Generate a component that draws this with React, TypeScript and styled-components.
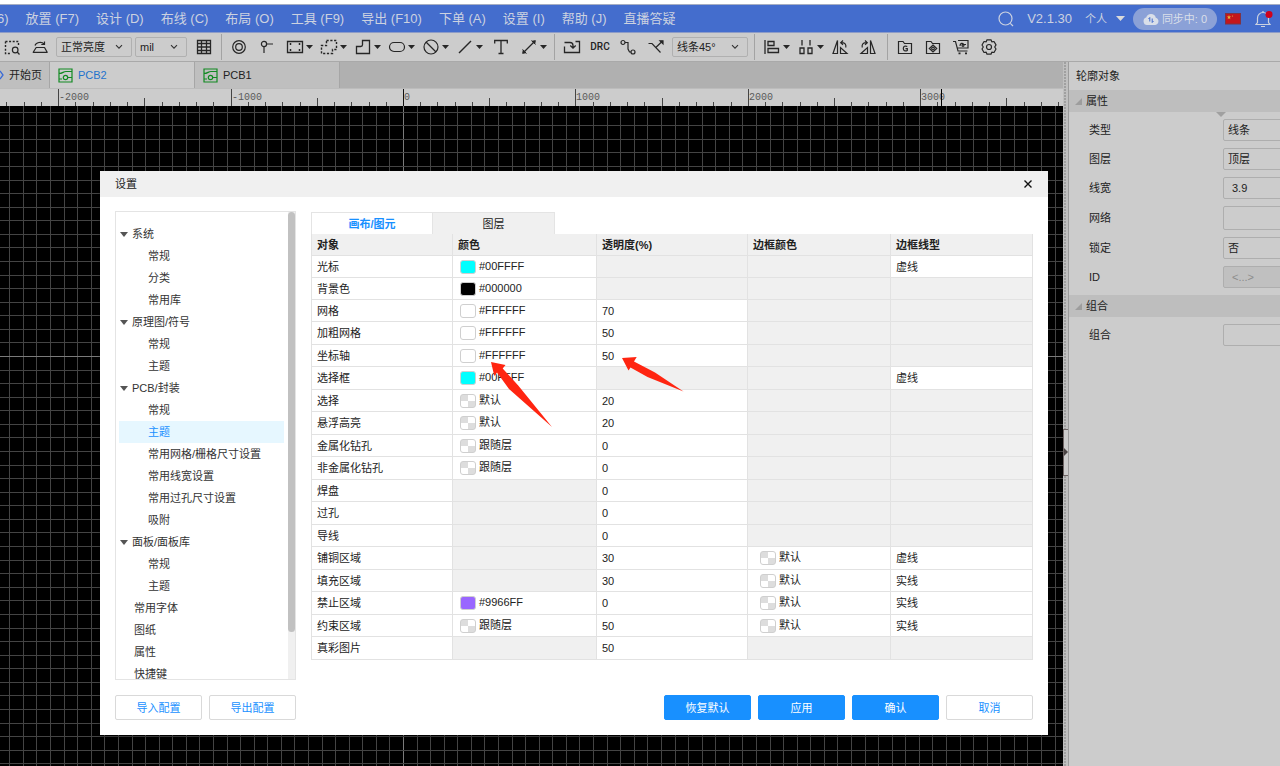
import React from "react";
import styled, { createGlobalStyle, css } from "styled-components";

const GlobalStyle = createGlobalStyle`
  * { box-sizing: border-box; }
  html, body, #root { height: 100%; }
  body {
    margin: 0;
    overflow: hidden;
    background: #ffffff;
    color: #222222;
    font-family: "Liberation Sans", "Noto Sans CJK SC", sans-serif;
    font-size: 11px;
    line-height: 16px;
  }
  button, input, select {
    margin: 0;
    padding: 0;
    font: inherit;
    color: inherit;
  }
  ul { margin: 0; padding: 0; list-style: none; }
`;

/* ---------- page frame ---------- */

const Page = styled.div`
  position: relative;
  display: flex;
  flex-direction: column;
  height: 100vh;
  min-height: 766px;
  overflow: hidden;
`;

const MenuBar = styled.header`
  display: flex;
  align-items: center;
  height: 33px;
  padding: 1px 7px 0 0;
  border-top: 4px solid #ffffff;
  border-bottom: 1px solid #8d9cc8;
  background: #446dcd;
  box-shadow: inset 0 1px 0 #a5adc2;
  color: #ccd2e0;
  font-size: 13px;
  white-space: nowrap;
  flex: none;
`;

const MenuList = styled.nav`
  display: flex;
  gap: 17px;
  margin-left: -3px;
`;

const MenuButton = styled.button`
  border: 0;
  background: none;
  line-height: 20px;
  white-space: nowrap;
`;

const MenuRight = styled.div`
  display: flex;
  align-items: center;
  margin-left: auto;
`;

const IconButton = styled.button`
  display: grid;
  place-items: center;
  border: 0;
  background: none;
`;

const Version = styled.span`
  margin-left: 13px;
`;

const Account = styled.button`
  display: flex;
  align-items: center;
  gap: 9px;
  margin-left: 13px;
  border: 0;
  background: none;
  font-size: 11px;
`;

const SyncPill = styled.button`
  display: flex;
  align-items: center;
  justify-content: center;
  gap: 3px;
  width: 84px;
  height: 22px;
  margin: 0 8px;
  border: 0;
  border-radius: 11px;
  background: #8ba1d7;
  color: #dadfe9;
  font-size: 11px;
`;

const BellButton = styled(IconButton)`
  margin-left: 14px;
`;

/* ---------- toolbar ---------- */

const Toolbar = styled.div`
  display: flex;
  align-items: center;
  height: 29px;
  padding-right: 8px;
  border-bottom: 1px solid #a9a9a9;
  background: #cccccc;
  margin-left: -2px;
  flex: none;
`;

const ToolGroup = styled.div`
  display: flex;
  align-items: center;
  margin-right: 2px;
`;

const ToolButton = styled(IconButton)`
  width: 28px;
  height: 26px;
`;

const ToolMenu = styled.button`
  display: flex;
  align-items: center;
  gap: 2px;
  width: 34px;
  height: 26px;
  padding-left: 5px;
  border: 0;
  background: none;
`;

const Separator = styled.i`
  width: 1px;
  height: 26px;
  margin: 0 3px;
  background: #a3a3a3;
`;

const PickerBox = styled.div<{ $width: number }>`
  display: grid;
  grid-template-columns: 1fr 16px;
  align-items: center;
  width: ${(p) => p.$width}px;
  height: 20px;
  margin-right: 3px;
  border: 1px solid #b0b0b0;
  border-radius: 2px;
  svg { grid-area: 1 / 2; pointer-events: none; }
`;

const Picker = styled.select`
  grid-area: 1 / 1 / 2 / 3;
  width: 100%;
  height: 18px;
  padding: 0 0 0 4px;
  border: 0;
  appearance: none;
  background: none;
`;

const DrcLabel = styled.span`
  font-size: 10px;
  line-height: 12px;
  font-family: Roboto, sans-serif;
  font-weight: 500;
`;

/* ---------- work area ---------- */

const Work = styled.div`
  display: flex;
  flex: 1;
  min-height: 0;
`;

const Editor = styled.main`
  display: flex;
  flex-direction: column;
  flex: 1;
  min-width: 0;
`;

const FileTabs = styled.div`
  display: flex;
  height: 27px;
  background: #b0b0b0;
  border-bottom: 1px solid #bcbcbc;
  flex: none;
`;

const FileTab = styled.button<{ $active?: boolean; $home?: boolean }>`
  display: flex;
  align-items: center;
  gap: 5px;
  width: ${(p) => (p.$home ? 50 : 145)}px;
  padding-left: ${(p) => (p.$home ? 0 : 8)}px;
  border: 0;
  border-right: 1px solid #a6a6a6;
  background: ${(p) => (p.$active ? "#cccccc" : "#bfbfbf")};
  color: ${(p) => (p.$active ? "#1f73cc" : "#222222")};
  white-space: nowrap;
  overflow: hidden;
`;

const RulerSvg = styled.svg`
  display: block;
  width: 100%;
  height: 17px;
  background: #cccccc;
  flex: none;
  text { font: 10px "Liberation Mono", monospace; fill: #5a5a5a; }
`;

const CanvasArea = styled.div`
  flex: 1;
  min-height: 0;
  background: #000000;
  overflow: hidden;
`;

const GridSvg = styled.svg`
  display: block;
  width: 100%;
  height: 100%;
`;

const Splitter = styled.div`
  display: flex;
  align-items: center;
  width: 6px;
  border-right: 1px solid #9c9c9c;
  background: radial-gradient(circle at 2px 1px, #a0a0a0 1px, transparent 1px) 0 0 / 5px 3px #c0c0c0;
  padding-top: 76px;
  flex: none;
`;

const SplitHandle = styled.button`
  display: flex;
  align-items: center;
  width: 5px;
  height: 47px;
  border: 1px solid #6e6565;
  border-right: 0;
  background: #cccccc;
  overflow: hidden;
`;

/* ---------- property panel ---------- */

const Panel = styled.aside`
  width: 211px;
  background: #cccccc;
  overflow: hidden;
  flex: none;
`;

const PanelTitle = styled.div`
  height: 28px;
  padding: 6px 7px;
`;

const PanelSection = styled.button`
  display: flex;
  align-items: center;
  gap: 4px;
  width: 100%;
  height: 22px;
  padding-left: 6px;
  border: 0;
  background: #bebebe;
`;

const Fields = styled.div`
  display: flex;
  flex-direction: column;
  gap: 7px;
  padding: 7px 0 7px 20px;
`;

const Field = styled.div`
  display: flex;
  align-items: center;
  label { flex: 0 0 134px; }
`;

const fieldBox = css`
  flex: 0 0 120px;
  height: 22px;
  padding: 0 4px;
  border: 1px solid #aeaeae;
  border-radius: 2px;
  background: #cccccc;
`;

const FieldSelect = styled.select`
  ${fieldBox}
  appearance: none;
`;

const FieldInput = styled.input<{ $tall?: boolean }>`
  ${fieldBox}
  height: ${(p) => (p.$tall ? 24 : 22)}px;
  padding: 0 8px;
  &:disabled { background: #c0c0c0; color: #8c8c8c; }
`;

const WidthMarker = styled.svg`
  position: absolute;
  right: 54px;
  top: 112px;
`;

/* ---------- settings dialog ---------- */

const Dialog = styled.section`
  position: absolute;
  left: 100px;
  right: 232px;
  top: 171px;
  background: #ffffff;
  box-shadow: 0 1px 3px rgba(0, 0, 0, 0.4);
`;

const DialogHead = styled.div`
  display: flex;
  align-items: center;
  justify-content: space-between;
  height: 26px;
  padding: 0 15px;
  background: #f0f0f0;
`;

const DialogBody = styled.div`
  display: flex;
  gap: 15px;
  height: 483px;
  padding: 14px 15px 0;
`;

const TreePane = styled.div`
  display: flex;
  flex: 0 0 181px;
  border: 1px solid #e4e4e4;
  overflow: hidden;
`;

const TreeList = styled.ul`
  flex: 1;
  padding: 11px 4px 0 3px;
`;

const TreeNode = styled.button<{ $depth: number; $active?: boolean }>`
  display: flex;
  align-items: center;
  gap: 4px;
  width: 165px;
  height: 22px;
  padding-left: ${(p) => [1, 15, 29][p.$depth]}px;
  border: 0;
  background: ${(p) => (p.$active ? "#e6f7ff" : "none")};
  color: ${(p) => (p.$active ? "#1890ff" : "#333333")};
  white-space: nowrap;
`;

const ScrollTrack = styled.div`
  width: 8px;
  background: #f0f0f0;
`;

const ScrollThumb = styled.div`
  height: 90%;
  border-radius: 4px;
  background: #c1c1c1;
`;

const Content = styled.div`
  flex: 1;
  min-width: 0;
  padding-top: 1px;
`;

const Tabs = styled.div`
  display: flex;
  height: 22px;
`;

const Tab = styled.button<{ $active?: boolean }>`
  width: 122px;
  border: 1px solid #e4e4e4;
  border-bottom: 0;
  background: ${(p) => (p.$active ? "#ffffff" : "#f0f0f0")};
  color: ${(p) => (p.$active ? "#1890ff" : "#222222")};
  font-weight: ${(p) => (p.$active ? 700 : 400)};
  & + & { border-left: 0; }
`;

const Table = styled.table`
  width: 100%;
  table-layout: fixed;
  border-spacing: 0;
  border-left: 1px solid #e2e2e2;
`;

const Column = styled.col<{ $width?: number }>`
  width: ${(p) => (p.$width ? `${p.$width}px` : "auto")};
`;

const HeadCell = styled.th`
  height: 22px;
  padding: 0 5px;
  border-right: 1px solid #e2e2e2;
  border-bottom: 1px solid #e2e2e2;
  background: #f0f0f0;
  text-align: left;
`;

const Row = styled.tr`
  height: 22px;
  &:nth-child(2n + 4) { height: 23px; }
`;

const Cell = styled.td<{ $off?: boolean; $inset?: number }>`
  padding: 0 0 0 ${(p) => p.$inset ?? 5}px;
  border-right: 1px solid #e2e2e2;
  border-bottom: 1px solid #e2e2e2;
  background: ${(p) => (p.$off ? "#f0f0f0" : "#ffffff")};
`;

const ColorValue = styled.button`
  display: flex;
  align-items: center;
  gap: 3px;
  border: 0;
  background: none;
  line-height: 16px;
  span { padding-bottom: 2px; }
`;

const Swatch = styled.i<{ $color: string | null }>`
  width: 16px;
  height: 14px;
  border: 1px solid #cfcfcf;
  border-radius: 3px;
  background: ${(p) =>
    p.$color ?? "conic-gradient(#ffffff 25%, #dddddd 0 50%, #ffffff 0 75%, #dddddd 0)"};
`;

const DialogFoot = styled.div`
  display: flex;
  gap: 7px;
  padding: 15px;
`;

const FootButton = styled.button<{ $primary?: boolean; $push?: boolean }>`
  width: 87px;
  height: 25px;
  border: 1px solid ${(p) => (p.$primary ? "#1890ff" : "#d9d9d9")};
  border-radius: 2px;
  background: ${(p) => (p.$primary ? "#1890ff" : "#ffffff")};
  color: ${(p) => (p.$primary ? "#ffffff" : "#1890ff")};
  margin-left: ${(p) => (p.$push ? "auto" : "0")};
`;

const Arrows = styled.svg`
  position: absolute;
  left: 490px;
  top: 355px;
  pointer-events: none;
`;

/* ---------- icons ---------- */

const Icon = ({ children }: { children: React.ReactNode }) => (
  <svg width="18" height="18" viewBox="0 0 18 18" fill="none" stroke="#262626" strokeWidth="1.2">
    {children}
  </svg>
);

const Caret = () => (
  <svg width="7" height="4" viewBox="0 0 7 4">
    <path d="M0 0h7L3.5 4z" fill="#262626" />
  </svg>
);

const Chevron = () => (
  <svg width="8" height="6" viewBox="0 0 8 6" fill="none" stroke="#333333" strokeWidth="1.1">
    <path d="M1 1.2l3 3 3-3" />
  </svg>
);

const ic = {
  marquee: (
    <Icon>
      <path d="M2.5 3.5h13v5M2.5 3.5v12h6" strokeDasharray="2 1.6" strokeWidth="1.4" />
      <circle cx="12.2" cy="12" r="2.8" />
      <path d="M14.2 14l2.3 2.5" />
    </Icon>
  ),
  dome: (
    <Icon>
      <path d="M5.2 9.5h8.3l2.7 4.8H2.2z" strokeLinejoin="round" />
      <path d="M4 7.5c.8-3 6.5-4.6 9-1.5M13.5 3.5v3h-3.2" />
    </Icon>
  ),
  grid: (
    <Icon>
      <path
        d="M2.5 2.5h13v13h-13zM6.5 2.5v13M11.5 2.5v13M2.5 5.5h13M2.5 9h13M2.5 12.5h13"
        strokeWidth="1.3"
      />
    </Icon>
  ),
  pad: (
    <Icon>
      <circle cx="9" cy="9" r="6.3" />
      <circle cx="9" cy="9" r="3.3" />
    </Icon>
  ),
  pin: (
    <Icon>
      <circle cx="6" cy="6" r="2.6" />
      <path d="M8.6 6H15M6 8.6V15" />
    </Icon>
  ),
  rect: (
    <Icon>
      <path d="M1.5 3.5h15v11h-15z" strokeWidth="1.3" />
      <path d="M3.5 6h2M4.5 5v2M12.5 6h2M13.5 5v2M3.5 12h2M4.5 11v2M12.5 12h2M13.5 11v2" strokeWidth="1" />
    </Icon>
  ),
  dashed: (
    <Icon>
      <path d="M6.5 2.5h10v9h-4v4H1.5v-8h5z" strokeDasharray="2.2 1.6" strokeWidth="1.4" />
    </Icon>
  ),
  notch: (
    <Icon>
      <path d="M8.5 2.5h7v13h-13v-7h4.2c1 0 1.8-.6 1.8-1.8z" strokeWidth="1.3" />
    </Icon>
  ),
  slot: (
    <Icon>
      <rect x="1.5" y="4.5" width="15" height="9" rx="4.5" />
    </Icon>
  ),
  ban: (
    <Icon>
      <circle cx="9" cy="9" r="7" />
      <path d="M4 4l10 10" />
    </Icon>
  ),
  line: (
    <Icon>
      <path d="M3 15L15 3" strokeWidth="1.5" />
    </Icon>
  ),
  text: (
    <Icon>
      <path d="M2.7 5.5v-3h12.6v3M9 2.5v13M6.5 15.5h5" strokeWidth="1.3" />
    </Icon>
  ),
  dimension: (
    <Icon>
      <path d="M4 14L14 4" />
      <path d="M3.2 12l2.8 2.8-3.4.6zM12 3.2L14.800 6l.6-3.400z" fill="#262626" strokeWidth=".8" />
      <path d="M2.500 11.500l4 4M11.500 2.500l4 4" strokeWidth="1" />
    </Icon>
  ),
  importer: (
    <Icon>
      <path d="M1.5 4.5h5.500c2 0 3 1 3 3v2M7.300 7.500l2.700 2.700 2.700-2.700M1.500 8.500v6h15v-11h-4" strokeWidth="1.3" />
    </Icon>
  ),
  route: (
    <Icon>
      <circle cx="4" cy="4.5" r="2" />
      <circle cx="14" cy="14" r="2" />
      <path d="M6 4.5h3v6.5l1.5 3H12" />
    </Icon>
  ),
  split: (
    <Icon>
      <path d="M1.5 5.5h3.500l8.500 9M8.800 9.500L14.500 4" />
      <path d="M13 2.800h3v3z" fill="#262626" />
    </Icon>
  ),
  align: (
    <Icon>
      <path d="M2 2v14M5 3.5h6v4H5zM5 10.5h10.5v4H5z" strokeWidth="1.3" />
    </Icon>
  ),
  distribute: (
    <Icon>
      <path d="M5 2v5.5M13 2v5.5M3 10h4v5.5H3zM11 10h4v5.5h-4z" strokeWidth="1.3" />
    </Icon>
  ),
  flipLeft: (
    <Icon>
      <path d="M6.500 2.500v13H2zM9.500 9.500v6h6.500z" />
      <path d="M14.800 9.500c.5-3-.8-4.800-4.300-4.800M12 2.500L9.700 4.700l2.300 2.200" />
    </Icon>
  ),
  flipRight: (
    <Icon>
      <path d="M11.500 2.500v13H16zM8.500 9.500v6H2z" />
      <path d="M3.200 9.500c-.5-3 .8-4.800 4.300-4.800M6 2.500l2.300 2.200L6 6.900" />
    </Icon>
  ),
  gerber: (
    <Icon>
      <path d="M2.5 15.5v-12h4.5l1.5 2h7v10z" />
      <path d="M11.3 8.600c-2.200-1.300-4-.1-4 2s2 3 4 1.800v-1.700H9.500" />
    </Icon>
  ),
  camera: (
    <Icon>
      <path d="M2.5 15.5v-12h4.5l1.5 2h7v10z" />
      <path d="M9 7l3.700 3.500L9 14l-3.700-3.500z" />
      <circle cx="9" cy="10.5" r="1.3" />
    </Icon>
  ),
  cart: (
    <Icon>
      <path d="M1 3.5h2.500l2.500 9.500h9.500M6 2.500h10v7.500H5.500" />
      <path d="M8 8c0-3 3-3.500 3.500-1.500H14" />
      <circle cx="11" cy="7.300" r="1" />
      <path d="M6.500 15.300h2M13 15.300h2" strokeWidth="1.8" />
    </Icon>
  ),
  gear: (
    <Icon>
      <path
        d="M7 1.800h4l.8 2 2.200-.3 2 3.400L14.700 9l1.300 2-2 3.500-2.200-.3-.8 2H7l-.8-2-2.200.3L2 11l1.300-2L2 7l2-3.500 2.200.3z"
        strokeLinejoin="round"
      />
      <circle cx="9" cy="9" r="2.5" />
    </Icon>
  ),
};

const BoardIcon = () => (
  <svg width="15" height="15" viewBox="0 0 15 15" fill="none" stroke="#128a22" strokeWidth="1.2">
    <path d="M1 1h13v13H1zM1 5.500c4 0 4-2 7-2h6M1 11h3M10 9.500h4" />
    <circle cx="7.5" cy="9.5" r="2.2" />
  </svg>
);

const SectionMark = () => (
  <svg width="7" height="7" viewBox="0 0 7 7">
    <path d="M7 0v7H0z" fill="#9d9d9d" />
  </svg>
);

/* ---------- drawing surface ---------- */

const ORIGIN_X = 403;
const AXIS_Y = 250;
const GRID_STEP = 13.575;
const TICK_STEP = 17.24;
const SIDE_WIDTH = 217;
const LABEL_WIDTH = 30;

const range = (from: number, to: number) =>
  Array.from({ length: to - from }, (_, i) => from + i);

const Ruler = () => {
  const end = window.innerWidth - SIDE_WIDTH;
  const last = Math.ceil((end - ORIGIN_X) / TICK_STEP);
  return (
    <RulerSvg shapeRendering="crispEdges">
      {range(-23, last).map((n) => {
        const x = Math.round(ORIGIN_X + n * TICK_STEP);
        const major = n % 10 === 0;
        const length = major ? 17 : n % 5 === 0 ? 8 : 4;
        return (
          <React.Fragment key={n}>
            <rect x={x} y={17 - length} width="1" height={length} fill={n === 0 ? "#111111" : "#444444"} />
            {major && x + LABEL_WIDTH < end && (
              <text x={x + 1} y="11">
                {n * 100}
              </text>
            )}
          </React.Fragment>
        );
      })}
      <rect x="941" y="0" width="1" height="17" fill="#000000" />
    </RulerSvg>
  );
};

const Grid = () => (
  <GridSvg shapeRendering="crispEdges">
    {range(-30, 130).map((n) => (
      <rect
        key={`v${n}`}
        x={Math.round(ORIGIN_X + n * GRID_STEP)}
        y="0"
        width="1"
        height="100%"
        fill={n === 0 ? "#7a7a7a" : "#444444"}
      />
    ))}
    {range(-19, 80).map((n) => (
      <rect
        key={`h${n}`}
        x="0"
        y={Math.round(AXIS_Y + n * GRID_STEP)}
        width="100%"
        height="1"
        fill={n === 0 ? "#7a7a7a" : "#444444"}
      />
    ))}
  </GridSvg>
);

/* ---------- data ---------- */

const menus = [
  "6)", "放置 (F7)", "设计 (D)", "布线 (C)", "布局 (O)", "工具 (F9)",
  "导出 (F10)", "下单 (A)", "设置 (I)", "帮助 (J)", "直播答疑",
];

type Node = [label: string, depth: 0 | 1 | 2];
const tree: Node[] = [
  ["系统", 0], ["常规", 2], ["分类", 2], ["常用库", 2],
  ["原理图/符号", 0], ["常规", 2], ["主题", 2],
  ["PCB/封装", 0], ["常规", 2], ["主题", 2], ["常用网格/栅格尺寸设置", 2],
  ["常用线宽设置", 2], ["常用过孔尺寸设置", 2], ["吸附", 2],
  ["面板/面板库", 0], ["常规", 2], ["主题", 2],
  ["常用字体", 1], ["图纸", 1], ["属性", 1], ["快捷键", 1],
];
const ACTIVE_NODE = 9;

interface ThemeRow {
  name: string;
  color?: string;
  opacity?: number;
  border?: string;
  line?: string;
}

const rows: ThemeRow[] = [
  { name: "光标", color: "#00FFFF", line: "虚线" },
  { name: "背景色", color: "#000000" },
  { name: "网格", color: "#FFFFFF", opacity: 70 },
  { name: "加粗网格", color: "#FFFFFF", opacity: 50 },
  { name: "坐标轴", color: "#FFFFFF", opacity: 50 },
  { name: "选择框", color: "#00FFFF", line: "虚线" },
  { name: "选择", color: "默认", opacity: 20 },
  { name: "悬浮高亮", color: "默认", opacity: 20 },
  { name: "金属化钻孔", color: "跟随层", opacity: 0 },
  { name: "非金属化钻孔", color: "跟随层", opacity: 0 },
  { name: "焊盘", opacity: 0 },
  { name: "过孔", opacity: 0 },
  { name: "导线", opacity: 0 },
  { name: "铺铜区域", opacity: 30, border: "默认", line: "虚线" },
  { name: "填充区域", opacity: 30, border: "默认", line: "实线" },
  { name: "禁止区域", color: "#9966FF", opacity: 0, border: "默认", line: "实线" },
  { name: "约束区域", color: "跟随层", opacity: 50, border: "默认", line: "实线" },
  { name: "真彩图片", opacity: 50 },
];

/* ---------- pieces ---------- */

const Tool = ({ name, icon }: { name: string; icon: React.ReactNode }) => (
  <ToolButton aria-label={name}>{icon}</ToolButton>
);

const Drop = ({ name, icon }: { name: string; icon: React.ReactNode }) => (
  <ToolMenu aria-label={name}>
    {icon}
    <Caret />
  </ToolMenu>
);

const Pick = ({ name, value, width }: { name: string; value: string; width: number }) => (
  <PickerBox $width={width}>
    <Picker aria-label={name}>
      <option>{value}</option>
    </Picker>
    <Chevron />
  </PickerBox>
);

const ColorCell = ({ value, inset }: { value?: string; inset: number }) => (
  <Cell $off={!value} $inset={inset}>
    {value && (
      <ColorValue>
        <Swatch $color={value.startsWith("#") ? value : null} />
        <span>{value}</span>
      </ColorValue>
    )}
  </Cell>
);

const SettingsDialog = () => (
  <Dialog role="dialog" aria-labelledby="settings-title">
    <DialogHead>
      <span id="settings-title">设置</span>
      <IconButton aria-label="关闭">
        <svg width="10" height="10" viewBox="0 0 10 10" stroke="#111111" strokeWidth="1.4">
          <path d="M1.5 1.5l7 7M8.5 1.5l-7 7" />
        </svg>
      </IconButton>
    </DialogHead>
    <DialogBody>
      <TreePane>
        <TreeList>
          {tree.map(([label, depth], i) => (
            <li key={i}>
              <TreeNode $depth={depth} $active={i === ACTIVE_NODE}>
                {depth === 0 && (
                  <svg width="8" height="5" viewBox="0 0 8 5">
                    <path d="M0 0h8L4 5z" fill="#555555" />
                  </svg>
                )}
                {label}
              </TreeNode>
            </li>
          ))}
        </TreeList>
        <ScrollTrack>
          <ScrollThumb />
        </ScrollTrack>
      </TreePane>
      <Content>
        <Tabs role="tablist">
          <Tab role="tab" aria-selected="true" $active>
            画布/图元
          </Tab>
          <Tab role="tab" aria-selected="false">
            图层
          </Tab>
        </Tabs>
        <Table>
          <colgroup>
            <Column $width={141} />
            <Column $width={144} />
            <Column $width={151} />
            <Column $width={143} />
            <Column />
          </colgroup>
          <thead>
            <tr>
              {["对象", "颜色", "透明度(%)", "边框颜色", "边框线型"].map((h) => (
                <HeadCell key={h}>{h}</HeadCell>
              ))}
            </tr>
          </thead>
          <tbody>
            {rows.map((r) => (
              <Row key={r.name}>
                <Cell>{r.name}</Cell>
                <ColorCell value={r.color} inset={7} />
                <Cell $off={r.opacity === undefined}>{r.opacity}</Cell>
                <ColorCell value={r.border} inset={12} />
                <Cell $off={!r.line}>{r.line}</Cell>
              </Row>
            ))}
          </tbody>
        </Table>
      </Content>
    </DialogBody>
    <DialogFoot>
      <FootButton>导入配置</FootButton>
      <FootButton>导出配置</FootButton>
      <FootButton $primary $push>
        恢复默认
      </FootButton>
      <FootButton $primary>应用</FootButton>
      <FootButton $primary>确认</FootButton>
      <FootButton>取消</FootButton>
    </DialogFoot>
  </Dialog>
);

export default function App() {
  return (
    <Page>
      <GlobalStyle />
      <MenuBar>
        <MenuList>
          {menus.map((m) => (
            <MenuButton key={m}>{m}</MenuButton>
          ))}
        </MenuList>
        <MenuRight>
          <IconButton aria-label="搜索">
            <svg width="16" height="16" viewBox="0 0 16 16" fill="none" stroke="#ccd2e0" strokeWidth="1.2">
              <circle cx="7.5" cy="7.5" r="6.5" />
              <path d="M12.3 12.3l2.700 2.700" />
            </svg>
          </IconButton>
          <Version>V2.1.30</Version>
          <Account>
            个人
            <svg width="9" height="5" viewBox="0 0 9 5">
              <path d="M0 0h9L4.5 5z" fill="#dadada" />
            </svg>
          </Account>
          <SyncPill>
            <svg width="16" height="12" viewBox="0 0 16 12">
              <path d="M4 12a3.800 3.800 0 0 1-.8-7.400 5 5 0 0 1 9.600.2A3.700 3.700 0 0 1 12.300 12z" fill="#dadfe9" />
              <path d="M6.800 8.500V4.500L5.500 6M9.200 5.500v4l1.300-1.500" stroke="#446dcd" fill="none" />
            </svg>
            同步中: 0
          </SyncPill>
          <IconButton aria-label="语言">
            <svg width="16" height="12" viewBox="0 0 16 12">
              <path d="M0 0h16v11.500H0z" fill="#7d3446" />
              <path d="M1 1h14v9.500H1z" fill="#c4161c" />
              <path d="M4 2l.6 1.500 1.600.1-1.300 1 .5 1.600L4 5.300l-1.400.9.500-1.600-1.300-1 1.600-.1z" fill="#e2b53c" />
              <circle cx="7.5" cy="3" r=".6" fill="#e2b53c" />
            </svg>
          </IconButton>
          <BellButton aria-label="通知">
            <svg width="18" height="18" viewBox="0 0 18 18" fill="none" stroke="#ccd2e0" strokeWidth="1.2">
              <path d="M1 14.500h14l-1.500-2V8a5.500 5.500 0 0 0-11 0v4.500zM6 16.500h4M8 2.500V1" />
              <circle cx="14" cy="4.5" r="3.500" fill="#d0021b" stroke="none" />
            </svg>
          </BellButton>
        </MenuRight>
      </MenuBar>

      <Toolbar role="toolbar">
        <ToolGroup>
          <Tool name="框选" icon={ic.marquee} />
          <Tool name="铺铜" icon={ic.dome} />
        </ToolGroup>
        <Pick name="亮度" value="正常亮度" width={76} />
        <Pick name="单位" value="mil" width={52} />
        <Tool name="网格" icon={ic.grid} />
        <Separator />
        <ToolGroup>
          <Tool name="焊盘" icon={ic.pad} />
          <Tool name="过孔" icon={ic.pin} />
          <Drop name="矩形" icon={ic.rect} />
          <Drop name="区域" icon={ic.dashed} />
          <Drop name="板框" icon={ic.notch} />
          <Drop name="槽孔" icon={ic.slot} />
          <Drop name="禁止区域" icon={ic.ban} />
          <Drop name="线条" icon={ic.line} />
        </ToolGroup>
        <ToolGroup>
          <Tool name="文本" icon={ic.text} />
          <Drop name="尺寸" icon={ic.dimension} />
        </ToolGroup>
        <Separator />
        <ToolGroup>
          <Tool name="导入变更" icon={ic.importer} />
          <Tool name="检查" icon={<DrcLabel>DRC</DrcLabel>} />
          <Tool name="布线" icon={ic.route} />
          <Tool name="差分布线" icon={ic.split} />
        </ToolGroup>
        <Pick name="拐角" value="线条45°" width={76} />
        <Separator />
        <ToolGroup>
          <Drop name="对齐" icon={ic.align} />
          <Drop name="分布" icon={ic.distribute} />
          <Tool name="左旋" icon={ic.flipLeft} />
          <Tool name="右旋" icon={ic.flipRight} />
        </ToolGroup>
        <Separator />
        <ToolGroup>
          <Tool name="导出 Gerber" icon={ic.gerber} />
          <Tool name="坐标文件" icon={ic.camera} />
          <Tool name="下单" icon={ic.cart} />
          <Tool name="设置" icon={ic.gear} />
        </ToolGroup>
      </Toolbar>

      <Work>
        <Editor>
          <FileTabs>
            <FileTab $home>
              <svg width="4" height="10" viewBox="0 0 4 10" fill="none" stroke="#3b6bd6" strokeWidth="1.3">
                <path d="M0 1l3 4-3 4" />
              </svg>
              开始页
            </FileTab>
            <FileTab $active>
              <BoardIcon />
              PCB2
            </FileTab>
            <FileTab>
              <BoardIcon />
              PCB1
            </FileTab>
          </FileTabs>
          <Ruler />
          <CanvasArea>
            <Grid />
          </CanvasArea>
        </Editor>
        <Splitter>
          <SplitHandle aria-label="折叠面板">
            <svg width="4" height="8" viewBox="0 0 4 8">
              <path d="M0 0l4 4-4 4z" fill="#4a4444" />
            </svg>
          </SplitHandle>
        </Splitter>
        <Panel>
          <PanelTitle>轮廓对象</PanelTitle>
          <PanelSection>
            <SectionMark />
            属性
          </PanelSection>
          <Fields>
            <Field>
              <label htmlFor="f-type">类型</label>
              <FieldSelect id="f-type">
                <option>线条</option>
              </FieldSelect>
            </Field>
            <Field>
              <label htmlFor="f-layer">图层</label>
              <FieldSelect id="f-layer">
                <option>顶层</option>
              </FieldSelect>
            </Field>
            <Field>
              <label htmlFor="f-width">线宽</label>
              <FieldInput id="f-width" defaultValue="3.9" />
            </Field>
            <Field>
              <label htmlFor="f-net">网络</label>
              <FieldInput id="f-net" $tall />
            </Field>
            <Field>
              <label htmlFor="f-lock">锁定</label>
              <FieldSelect id="f-lock">
                <option>否</option>
              </FieldSelect>
            </Field>
            <Field>
              <label htmlFor="f-id">ID</label>
              <FieldInput id="f-id" defaultValue="<...>" disabled />
            </Field>
          </Fields>
          <PanelSection>
            <SectionMark />
            组合
          </PanelSection>
          <Fields>
            <Field>
              <label htmlFor="f-group">组合</label>
              <FieldInput id="f-group" />
            </Field>
          </Fields>
        </Panel>
      </Work>

      <WidthMarker width="10" height="5" viewBox="0 0 10 5">
        <path d="M0 0h10L5 5z" fill="#a0a0a0" />
      </WidthMarker>

      <SettingsDialog />

      <Arrows width="200" height="76" viewBox="490 355 200 76" fill="#ff2511">
        <path d="M491 362l14.500 3-2.800 3.500 15.500 17L552 427l-43-38-12-16.500-2.700 3.500z" />
        <path d="M622 358l14.700-1-2.700 4.500 21 11 28.500 19-36-14.500-17-9.500-2 3z" />
      </Arrows>
    </Page>
  );
}
